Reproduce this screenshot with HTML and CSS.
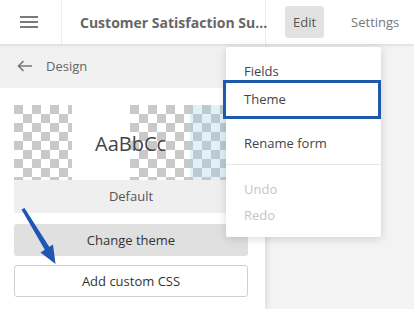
FILE: index.html
```html
<!DOCTYPE html>
<html lang="en">
<head>
  <meta charset="UTF-8" />
  <meta name="viewport" content="width=device-width, initial-scale=1.0"/>
  <title>Design</title>
  <link rel="stylesheet" href="styles.css">
</head>
<body>
  <div class="app">
    <header class="topbar">
      <button class="menu-btn" aria-label="Menu">
        <svg width="18" height="12" viewBox="0 0 18 12">
          <path d="M0 1h18M0 6h18M0 11h18" stroke="#7a7a7a" stroke-width="2"/>
        </svg>
      </button>
      <div class="form-title">Customer Satisfaction Su...</div>
      <nav class="tabs">
        <span class="tab active">Edit</span>
        <span class="tab">Settings</span>
      </nav>
    </header>

    <div class="main">
      <aside class="panel">
        <div class="panel-head">
          <svg width="16" height="12" viewBox="0 0 16 12">
            <path d="M15 6H1.5M6.5 1L1.5 6l5 5" fill="none" stroke="#777" stroke-width="1.6"/>
          </svg>
          <span>Design</span>
        </div>
        <div class="panel-body">
          <div class="theme-card">
            <div class="preview">
              <div class="checker"></div>
              <div class="blank"></div>
              <div class="checker wide"><div class="tint"></div></div>
              <span class="sample">AaBbCc</span>
            </div>
            <div class="theme-name">Default</div>
          </div>
          <button class="btn grey">Change theme</button>
          <button class="btn outline">Add custom CSS</button>
        </div>
      </aside>
      <section class="canvas"></section>
    </div>

    <ul class="dropdown">
      <li class="group">
        <div class="item">Fields</div>
        <div class="item selected">Theme</div>
      </li>
      <li class="group second">
        <div class="item">Rename form</div>
      </li>
      <li class="group last">
        <div class="item off">Undo</div>
        <div class="item off">Redo</div>
      </li>
    </ul>

    <svg class="pointer" width="70" height="70" viewBox="0 200 70 70">
      <polygon points="21.5,209.5 24.5,208 50,248 45.5,251" fill="#1f56b3"/>
      <polygon points="55.5,264 40.5,252.5 53,244.5" fill="#1f56b3"/>
    </svg>
  </div>
</body>
</html>
```

FILE: styles.css
```css
* {
  box-sizing: border-box;
}

body {
  font-family: 'Open Sans', 'DejaVu Sans', sans-serif;
  margin: 0;
  background: #f3f3f3;
}

.app {
  position: relative;
  width: 414px;
  height: 309px;
  overflow: hidden;
}

.topbar {
  position: relative;
  z-index: 2;
  display: flex;
  height: 44px;
  background: #fff;
  box-shadow: 0 1px 3px rgba(0,0,0,0.12);
}

.menu-btn {
  width: 62px;
  border: none;
  border-right: 1px solid #ececec;
  background: #fff;
  display: flex;
  align-items: center;
  padding: 0 0 0 20px;
}

.form-title {
  width: 204px;
  border-right: 1px solid #ececec;
  padding-left: 18px;
  display: flex;
  align-items: center;
  font-size: 14px;
  font-weight: bold;
  color: #666;
  white-space: nowrap;
}

.tabs {
  display: flex;
  align-items: center;
  padding-left: 19px;
  gap: 27px;
}

.tab {
  font-size: 13px;
  color: #777;
  line-height: 32px;
}

.tab.active {
  background: #e2e2e2;
  border-radius: 3px;
  padding: 0 8px;
  color: #555;
}

.main {
  display: flex;
  height: 265px;
}

.panel {
  width: 265px;
  background: #fff;
  box-shadow: 2px 0 6px rgba(0,0,0,0.1);
  position: relative;
  z-index: 1;
}

.panel-head {
  height: 44px;
  background: #f1f1f1;
  display: flex;
  align-items: center;
  gap: 13px;
  padding-left: 17px;
  font-size: 13px;
  color: #666;
}

.panel-body {
  padding: 17px 17px 0 14px;
  display: flex;
  flex-direction: column;
}

.theme-card {
  margin-bottom: 11px;
}

.preview {
  position: relative;
  display: flex;
  height: 75px;
}

.checker {
  width: 58px;
  background: repeating-conic-gradient(transparent 0 25%, #c9c9c9 0 50%) 0 0 / 18px 18px;
}

.checker.wide {
  flex: 1;
  position: relative;
}

.blank {
  width: 58px;
}

.tint {
  position: absolute;
  top: 0;
  bottom: 0;
  right: 0;
  width: 58px;
  background: rgba(160, 208, 228, 0.3);
}

.sample {
  position: absolute;
  left: 81px;
  top: 25px;
  font-size: 20px;
  color: #444;
}

.theme-name {
  height: 33px;
  line-height: 33px;
  background: #efefef;
  text-align: center;
  font-size: 13px;
  color: #555;
}

.btn {
  font-family: inherit;
  height: 32px;
  border-radius: 3px;
  font-size: 13px;
  color: #333;
  cursor: pointer;
}

.btn.grey {
  background: #e0e0e0;
  border: none;
  margin-bottom: 9px;
}

.btn.outline {
  background: #fff;
  border: 1px solid #cfcfcf;
}

.canvas {
  flex: 1;
}

.dropdown {
  position: absolute;
  z-index: 3;
  top: 47px;
  left: 226px;
  width: 155px;
  margin: 0;
  padding: 10px 0 0;
  list-style: none;
  background: #fff;
  border-radius: 2px;
  box-shadow: 0 2px 10px rgba(0,0,0,0.15);
}

.item {
  position: relative;
  line-height: 28px;
  padding-left: 18px;
  font-size: 13px;
  color: #444;
}

.item.selected::after {
  content: "";
  position: absolute;
  top: -5px;
  bottom: -6px;
  left: -3px;
  right: 0;
  border: 3px solid #1f5aaa;
}

.group.second {
  margin-top: 16px;
  padding-bottom: 7px;
}

.group.last {
  border-top: 1px solid #e6e6e6;
  padding: 11px 0 9px;
}

.item.off {
  line-height: 26px;
  color: #c6c6c6;
}

.pointer {
  position: absolute;
  z-index: 3;
  left: 0;
  top: 200px;
}
```
